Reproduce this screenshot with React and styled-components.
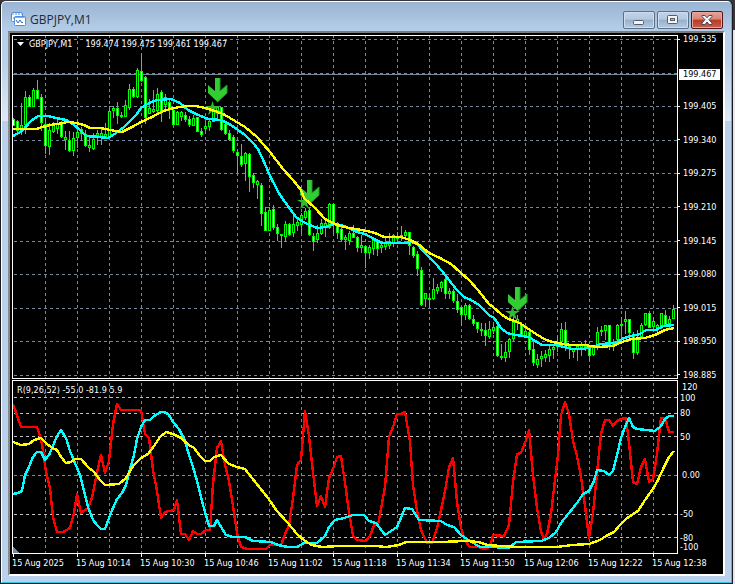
import React from 'react'
import styled, { createGlobalStyle } from 'styled-components';

const GlobalStyle = createGlobalStyle`
* {
  box-sizing: border-box;
}
body {
  margin: 0;
  background: linear-gradient(#3a343b 30px, #e9e7ea 30px);
}
`;

const Window = styled.div`
margin-right: 2px;
border: 1px solid #1b1a1e;
border-top-color: #3a343b;
border-radius: 6px 6px 0 0;
font-family: "DejaVu Sans Condensed", "DejaVu Sans", sans-serif;
font-size: 9px;
line-height: 10px;
color: #fff;
`;

const Frame = styled.div`
padding: 0 6px 6px;
border: 1px solid #fff;
border-right-color: #35c5e0;
border-bottom-color: #35c5e0;
border-radius: 5px 5px 0 0;
background: linear-gradient(#99b4d2 0, #b7cfe9 30px, #bad1eb 60px, #dde9f7 119px, #b9d1ea 119px);
`;

const TitleBar = styled.header`
display: flex;
align-items: center;
gap: 4px;
height: 29px;
padding: 6px 2px 0 3px;
`;

const Title = styled.h1`
flex: 1;
margin: 0;
font-family: "Open Sans", "Noto Sans", sans-serif;
font-size: 12px;
line-height: 16px;
font-weight: 400;
color: #1f2b3a;
`;

const WindowButtons = styled.div`
display: flex;
gap: 2px;
`;

const WindowButton = styled.button`
display: flex;
align-items: center;
justify-content: center;
width: 32px;
height: 18px;
padding: 0;
border: 1px solid ${({ $close }) => ($close ? '#54161c' : '#5d7089')};
border-radius: 2px;
box-shadow: inset 0 0 0 1px ${({ $close }) => ($close ? '#e6a79d' : '#cfdeef')};
background: ${({ $close }) =>
    $close
      ? 'linear-gradient(#e5a296 0, #d98577 45%, #b93a22 50%, #c8604c 100%)'
      : 'linear-gradient(#c2d3e7 0, #b4c8df 45%, #98b0cb 50%, #b4cbe3 100%)'};
`;

const Client = styled.main`
padding: 2px 0 0 2px;
border: 2px solid #fff;
border-top-color: #7c7c7c;
border-left-color: #8a8a8a;
background: #000;
`;

const ChartRow = styled.section`
display: flex;
margin-bottom: ${({ $gap }) => $gap || '0'};
`;

const Plot = styled.div`
position: relative;
flex: 1;
min-width: 0;
border: 1px solid #fff;
`;

const Drawing = styled.svg`
display: block;
width: 100%;
height: ${({ $height }) => $height};
`;

const Caption = styled.div`
position: absolute;
top: ${({ $top }) => $top};
left: 4px;
display: flex;
align-items: center;
gap: 5px;
white-space: pre;
`;

const Quotes = styled.span`
padding-left: 8px;
`;

const Scale = styled.div`
flex: 0 0 45px;
`;

const PriceScale = styled(Scale)`
display: flex;
flex-direction: column;
justify-content: space-between;
`;

const LevelScale = styled(Scale)`
display: grid;
grid-template-rows: 11px 15px 24px 38px 39px 24px 9px 10px;
padding-top: 2px;
`;

const Price = styled.div`
display: flex;
align-items: center;
gap: 3px;
line-height: 8px;

&::before {
  content: "";
  width: 2px;
  height: 1px;
  background: #fff;
}
`;

const BidPrice = styled.div`
width: 41px;
margin: 0 0 -3px 1px;
padding-left: 4px;
line-height: 11px;
background: #fff;
color: #000;
`;

const Level = styled.div`
padding-left: ${({ $indent }) => ($indent ? '4px' : '2px')};
`;

const TimeScale = styled.div`
display: grid;
grid-template-columns: repeat(10, minmax(0, 64fr)) minmax(0, 71fr);
height: 20px;
`;

const Time = styled.div`
white-space: nowrap;

&::before {
  content: "";
  display: block;
  width: 1px;
  height: 3px;
  margin: 0 0 1px 1px;
  background: #fff;
}
`;

// high, body top, body bottom, low, direction; one bar every 4 units
const BARS = `118 119 125 125 d,120 121 130 134 d,103 125 129 134 u,91 97 124 133 u,95 97 106 106 d,88 90 106 106 u,80 90 98 98 d,94 97 122 130 d,
118 124 145 153 d,123 130 146 154 u,122 125 131 132 u,118 123 128 133 u,121 123 136 137 d,131 137 139 149 u,131 140 150 151 d,132 138 150 155 u,
120 132 137 147 u,127 129 133 139 d,130 134 145 146 d,137 145 147 151 u,133 139 148 149 u,130 133 135 144 u,129 133 136 144 u,123 134 136 137 u,
106 111 137 137 u,106 108 110 117 u,102 108 115 123 d,112 115 116 117 u,100 105 116 116 u,84 89 107 109 u,87 89 96 97 d,68 70 96 97 u,
54 71 80 81 d,76 77 117 123 d,99 108 113 113 u,90 109 111 112 u,88 94 110 113 u,90 92 110 121 d,94 97 104 110 u,99 102 108 118 d,
107 110 124 124 d,111 112 124 124 u,111 112 116 120 u,112 115 119 121 d,116 119 124 126 d,115 118 125 125 u,117 117 131 131 d,128 131 134 136 d,
122 126 128 130 u,118 121 126 130 u,107 108 121 121 u,106 107 110 118 u,107 107 129 130 d,122 124 133 134 d,130 133 139 140 d,135 137 150 152 d,
150 152 155 172 d,144 156 164 166 d,152 153 163 180 u,153 154 176 191 d,173 175 182 187 d,180 181 184 198 u,183 185 213 225 d,207 212 230 230 d,
207 210 230 230 u,205 209 227 229 d,224 227 233 240 d,234 234 235 247 u,221 224 236 241 u,223 224 234 235 d,216 224 232 236 u,218 222 225 230 u,
213 215 224 233 u,208 211 217 219 u,208 210 234 235 d,233 236 241 250 d,225 233 239 242 u,219 223 233 234 u,221 223 226 236 u,203 204 227 228 u,
203 204 223 235 d,222 225 232 238 d,225 229 239 241 d,235 237 239 249 u,231 233 240 244 u,225 233 237 237 d,236 237 247 251 d,235 245 247 252 u,
245 246 252 267 d,245 247 252 258 u,239 240 248 254 u,240 241 248 255 d,243 245 247 252 u,237 242 246 249 u,233 241 245 248 u,234 235 243 246 u,
232 236 238 243 u,226 235 237 240 u,230 232 235 236 u,232 232 245 254 d,246 247 255 257 d,251 254 268 275 d,267 270 304 305 d,293 293 298 306 u,
294 298 299 307 u,278 289 298 299 u,284 287 290 293 u,281 282 287 291 u,275 279 293 298 d,288 291 293 298 u,289 291 300 302 d,294 301 309 312 d,
307 307 314 325 d,303 305 314 319 u,304 305 318 319 d,315 319 323 325 d,322 322 328 332 d,323 329 330 335 u,323 330 335 345 d,321 329 336 338 u,
322 327 330 333 u,325 326 355 356 d,344 356 357 359 u,342 352 357 361 u,338 339 351 357 u,317 322 338 340 u,315 319 321 329 u,322 325 334 334 d,
328 331 335 335 u,331 332 349 354 d,340 349 362 365 d,354 359 364 367 u,351 356 358 366 u,350 354 357 361 u,344 349 355 361 u,344 347 349 358 u,
335 343 346 351 u,323 329 341 342 u,322 330 347 350 d,344 346 348 358 u,348 348 351 357 u,345 346 349 360 u,342 345 347 355 u,340 346 348 350 d,
345 348 355 360 d,345 347 354 355 u,327 332 345 349 u,326 330 331 335 u,325 325 330 339 u,325 325 344 349 d,339 343 345 350 u,324 325 339 344 u,
317 324 325 334 u,311 319 321 333 u,319 319 332 335 d,332 334 352 358 d,330 339 352 354 u,323 325 336 337 u,313 313 324 325 u,311 313 327 327 d,
317 321 326 328 u,324 325 327 331 u,313 313 325 328 u,310 315 324 325 d,316 319 323 327 u,305 309 318 318 u`
  .split(',')
  .map((bar) => bar.trim().split(' '));

const SLOW_MA = '13,129 37,129 42,127 50,125 57,124 68,122 76,123 84,125 90,128 101,128 110,130 122,132 132,127 141,122 152,117 163,111 174,108 186,106 196,106 205,108 215,111 225,115 235,121 245,127 257,137 270,152 283,169 293,180 301,190 304,198 315,208 325,219 337,225 349,228 362,230 375,233 384,237 401,237 410,240 418,244 429,253 440,258 451,264 460,272 470,281 478,290 489,304 493,307 501,314 508,319 518,322 527,328 536,334 546,340 553,342 563,344 571,345 585,345 597,347 613,346 622,342 632,339 645,338 655,335 665,330 674,328';
const FAST_MA = '13,136 22,131 31,121 38,116 48,116 56,118 66,120 73,124 80,130 86,136 100,137 108,138 116,133 124,127 130,121 136,115 141,108 149,103 157,100 171,99 180,103 188,110 198,115 208,119 221,120 231,125 238,130 245,135 253,143 258,149 264,162 271,178 280,195 290,209 296,217 305,223 317,228 326,227 333,224 341,225 349,228 357,232 365,234 374,239 382,243 405,243 411,242 417,244 426,254 436,264 446,276 456,289 464,297 471,300 479,305 489,315 494,318 501,328 507,333 516,335 529,337 535,341 542,345 556,345 564,347 572,349 583,349 592,347 601,344 615,343 624,338 631,336 640,334 646,330 656,330 663,326 674,325';

const R_SHORT = '13,404 21,427 37,427 41,439 43,450 46,472 50,488 53,517 57,532 63,532 70,528 74,513 77,494 81,513 88,508 92,498 97,472 101,455 105,473 109,461 113,424 117,404 121,410 141,410 145,434 149,438 153,470 157,491 161,518 165,512 174,510 177,500 181,534 185,534 189,540 193,531 197,534 201,534 206,530 210,530 213,484 217,448 221,441 225,465 229,481 233,506 237,533 241,547 248,549 266,549 270,545 281,545 285,534 289,525 293,498 297,465 301,460 305,411 309,436 313,472 317,506 321,496 325,507 329,478 333,469 337,457 341,456 345,483 349,512 353,536 357,540 366,541 370,536 374,525 378,525 385,487 389,437 393,427 397,414 401,414 405,412 410,442 413,485 417,511 421,530 427,543 432,543 437,528 441,510 445,491 449,467 453,458 457,502 461,528 465,541 470,547 478,547 484,549 488,548 491,543 493,535 504,536 509,525 513,482 517,454 521,453 525,443 529,430 533,475 537,508 541,532 544,539 547,534 551,514 555,480 558,455 561,415 565,402 569,414 573,441 577,456 581,477 585,506 589,538 593,513 597,473 601,434 605,420 609,420 613,426 617,421 621,419 626,418 629,443 633,482 637,484 641,467 645,459 649,482 653,479 657,454 661,418 665,418 669,432 674,432';
const R_MEDIUM = '13,494 18,493 22,491 25,475 29,467 33,457 37,452 41,452 45,460 49,455 53,446 57,436 61,430 66,438 70,451 75,463 80,475 84,491 88,507 93,520 97,525 101,529 105,529 109,518 113,508 117,499 122,493 126,485 130,469 134,455 137,439 141,427 145,420 150,420 154,416 161,412 165,412 169,415 173,422 179,429 185,441 189,455 193,467 197,481 201,497 205,512 209,526 214,526 217,520 221,527 226,535 233,537 245,537 253,541 271,542 278,545 288,547 297,547 304,543 317,543 325,536 329,527 335,520 344,518 353,515 364,515 369,521 376,523 385,535 391,531 397,527 401,518 405,508 412,509 419,520 441,521 447,525 454,527 461,535 470,541 480,547 492,547 509,548 516,542 541,541 549,538 556,532 561,523 569,513 577,503 583,494 589,491 594,481 597,470 604,471 609,475 613,471 617,455 621,438 625,427 629,418 633,427 637,429 647,430 655,431 661,426 665,419 669,416 674,416';
const R_LONG = '13,442 21,445 29,444 34,440 41,438 46,443 52,448 57,450 61,457 66,463 71,462 75,459 81,459 88,467 94,472 100,480 105,485 119,484 126,478 133,466 141,458 148,454 154,446 160,437 166,432 173,434 181,438 189,445 194,448 200,456 205,461 210,461 214,457 221,455 229,464 237,467 245,469 252,478 260,488 268,498 277,511 287,522 297,534 305,541 312,545 322,547 340,546 376,546 386,547 399,545 406,542 440,542 466,541 478,542 488,545 500,546 520,547 557,547 572,545 589,544 600,540 606,536 614,532 620,525 626,519 633,514 638,511 645,500 653,489 658,480 664,467 669,457 674,451';

const GRID_X = Array.from({ length: 20 }, (_, i) => 45 + i * 32);
const PRICE_Y = [39, 73, 106, 140, 173, 207, 241, 274, 308, 341, 375];
const LEVEL_Y = [397, 413, 436, 475, 514, 537];

// arrow x, arrow top, star centre
const SIGNALS = [[217, 78, 108], [309, 180, 202], [517, 287, 313]];

const PRICES = ['199.405', '199.340', '199.275', '199.210', '199.145', '199.080', '199.015', '198.950', '198.885'];
const LEVELS = ['120', '100', '80', '50', '0.00', '-50', '-80', '-100'];
const TIMES = ['15 Aug 2025', '15 Aug 10:14', '15 Aug 10:30', '15 Aug 10:46', '15 Aug 11:02', '15 Aug 11:18', '15 Aug 11:34', '15 Aug 11:50', '15 Aug 12:06', '15 Aug 12:22', '15 Aug 12:38'];

function Line({ points, color }) {
    return <polyline points={points} fill="none" stroke={color} strokeWidth="2.4" strokeLinejoin="round" />
}

function VerticalGrid({ top, bottom, offset }) {
    return (
        <g stroke="#778899" strokeDasharray="3 3" strokeDashoffset={offset}>
            {GRID_X.map((x) => <line key={x} x1={x + 0.5} x2={x + 0.5} y1={top} y2={bottom} />)}
        </g>
    )
}

function Candle({ bar, x }) {
    const [high, top, bottom, low] = bar.map(Number);
    const height = bottom - top + 1;
    return (
        <g>
            <rect x={x} y={high} width="1" height={low - high + 1} fill="#00ff00" />
            <rect x={x - 1} y={top} width="3" height={height} fill="#00ff00" />
            {height > 2 && <rect x={x} y={top + 1} width="1" height={height - 2} fill={bar[4] === 'd' ? '#fff' : '#000'} />}
        </g>
    )
}

function Signal({ x, y, starY }) {
    return (
        <g shapeRendering="auto">
            <g transform={`translate(${x} ${y})`}>
                <path d="M-2 0h5v13l7-6v8L.5 24-9 15V7l7 6z" fill="#32cd32" />
                <path d="M3 0v13l7-6v8L.5 24" fill="none" stroke="#249a2b" />
            </g>
            <path transform={`translate(${x - 4} ${starY})`} d="M-.5-7l1.500 5h6l-5 3 2 6-4.500-4-4.500 4 2-6-5-3h6z" fill="#2fbd2f" />
        </g>
    )
}

function PriceChart() {
    return (
        <Drawing $height="342px" viewBox="13 36 664 342" preserveAspectRatio="none" shapeRendering="crispEdges" aria-hidden="true">
            <VerticalGrid top={36} bottom={378} offset={1} />
            <g stroke="#778899" strokeDasharray="3 3">
                {PRICE_Y.map((y) => <line key={y} x1="14" x2="677" y1={y + 0.5} y2={y + 0.5} />)}
            </g>
            <line x1="13" x2="677" y1="74.5" y2="74.5" stroke="#778899" />
            {BARS.map((bar, i) => <Candle key={i} bar={bar} x={13 + i * 4} />)}
            {SIGNALS.map(([x, y, starY]) => <Signal key={x} x={x} y={y} starY={starY} />)}
            <Line points={FAST_MA} color="#00ffff" />
            <Line points={SLOW_MA} color="#ffff00" />
        </Drawing>
    )
}

function OscillatorChart() {
    return (
        <Drawing $height="172px" viewBox="13 381 664 172" preserveAspectRatio="none" shapeRendering="crispEdges" aria-hidden="true">
            <VerticalGrid top={381} bottom={553} offset={4} />
            {LEVEL_Y.map((y) => (
                <line key={y} x1="14" x2="677" y1={y + 0.5} y2={y + 0.5} stroke={y === 475 ? '#778899' : '#c0c0c0'} strokeDasharray="3 3" />
            ))}
            <path d="M13 547v6h6z" fill="#778899" />
            <Line points={R_SHORT} color="#ff0000" />
            <Line points={R_MEDIUM} color="#00ffff" />
            <Line points={R_LONG} color="#ffff00" />
        </Drawing>
    )
}

function ChartIcon() {
    return (
        <svg width="15" height="15" viewBox="0 0 15 15" aria-hidden="true">
            <rect x=".5" y=".5" width="11" height="9" rx="1" fill="#fff" stroke="#4f8fdc" />
            <path d="M1 2h10" stroke="#4f8fdc" strokeDasharray="2 1" />
            <path d="M2 6h2l1-2 1 2h2" fill="none" stroke="#3a78c8" />
            <rect x="3.500" y="4.500" width="11" height="9" rx="1" fill="#fff" stroke="#4f8fdc" />
            <path d="M4 5.500h10" stroke="#78aeea" />
            <path d="M5 8l2 3 2-3 2 3 1-1" fill="none" stroke="#2f66b4" />
        </svg>
    )
}

function App() {
    return (
        <>
            <GlobalStyle />
            <Window>
                <Frame>
                    <TitleBar>
                        <ChartIcon />
                        <Title>GBPJPY,M1</Title>
                        <WindowButtons>
                            <WindowButton type="button" aria-label="Minimize">
                                <svg width="12" height="14" viewBox="0 0 12 14">
                                    <rect x=".5" y="7.500" width="10" height="4" rx="1" fill="#f4f4f4" stroke="#555c6b" />
                                </svg>
                            </WindowButton>
                            <WindowButton type="button" aria-label="Maximize">
                                <svg width="12" height="10" viewBox="0 0 12 10">
                                    <rect x=".5" y=".5" width="10" height="8" rx="1" fill="#f4f4f4" stroke="#555c6b" />
                                    <rect x="3.500" y="3.500" width="4" height="2" fill="#a8bdd6" stroke="#555c6b" />
                                </svg>
                            </WindowButton>
                            <WindowButton type="button" aria-label="Close" $close>
                                <svg width="12" height="10" viewBox="0 0 12 10">
                                    <path d="M1 .5h3l2 2.300L8 .5h3v1L8 4.700l3 3.300v1.500H8L6 7 4 9.500H1V8l3-3.300L1 1.500z" fill="#f6f6f6" stroke="#4a4855" />
                                </svg>
                            </WindowButton>
                        </WindowButtons>
                    </TitleBar>
                    <Client>
                        <ChartRow $gap="1px">
                            <Plot>
                                <PriceChart />
                                <Caption $top="3px">
                                    <svg width="7" height="4" viewBox="0 0 7 4" aria-hidden="true">
                                        <path d="M0 0h7L3.500 4z" fill="#fff" />
                                    </svg>
                                    <span>GBPJPY,M1</span>
                                    <Quotes>199.474 199.475 199.461 199.467</Quotes>
                                </Caption>
                            </Plot>
                            <PriceScale>
                                <Price>199.535</Price>
                                <BidPrice>199.467</BidPrice>
                                {PRICES.map((price) => <Price key={price}>{price}</Price>)}
                            </PriceScale>
                        </ChartRow>
                        <ChartRow>
                            <Plot>
                                <OscillatorChart />
                                <Caption $top="4px">R(9,26,52) -55.0 -81.9 5.9</Caption>
                            </Plot>
                            <LevelScale>
                                {LEVELS.map((level) => (
                                    <Level key={level} $indent={level === '120' || level === '0.00'}>{level}</Level>
                                ))}
                            </LevelScale>
                        </ChartRow>
                        <TimeScale>
                            {TIMES.map((time) => <Time key={time}>{time}</Time>)}
                        </TimeScale>
                    </Client>
                </Frame>
            </Window>
        </>
    )
}

export default App
